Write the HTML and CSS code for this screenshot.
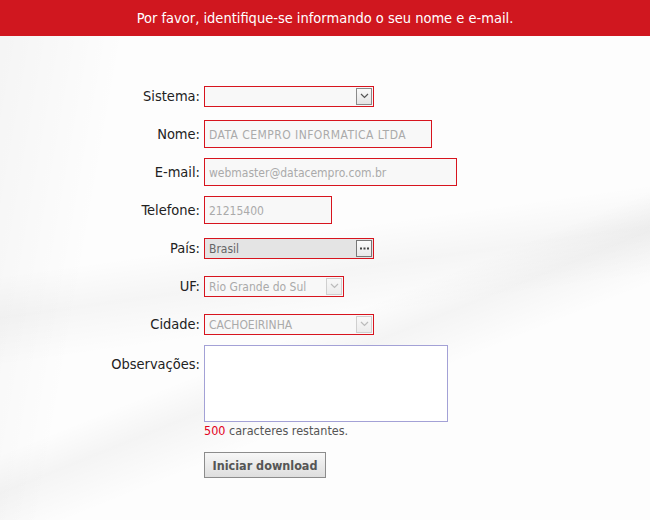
FILE: index.html
```html
<!DOCTYPE html>
<html lang="pt-BR">
<head>
    <meta charset="UTF-8">
    <title>Download</title>
    <link rel="stylesheet" href="styles.css">
</head>
<body>
    <div class="topbar">Por favor, identifique-se informando o seu nome e e-mail.</div>

    <form class="form">
        <div class="row">
            <label class="label">Sistema:</label>
            <div class="select sel-sistema">
                <span class="value"></span>
                <span class="btn">
                    <svg width="9" height="6" viewBox="0 0 9 6"><path d="M1 1 L4.5 4.5 L8 1" fill="none" stroke="#555" stroke-width="1.2"/></svg>
                </span>
            </div>
        </div>

        <div class="row">
            <label class="label">Nome:</label>
            <input class="text in-nome" type="text" value="DATA CEMPRO INFORMATICA LTDA" disabled>
        </div>

        <div class="row">
            <label class="label">E-mail:</label>
            <input class="text in-email" type="text" value="webmaster@datacempro.com.br" disabled>
        </div>

        <div class="row">
            <label class="label">Telefone:</label>
            <input class="text in-fone" type="text" value="21215400" disabled>
        </div>

        <div class="row">
            <label class="label">País:</label>
            <div class="select lookup sel-pais">
                <span class="value">Brasil</span>
                <span class="btn dots">
                    <svg width="9" height="3" viewBox="0 0 9 3"><rect x="0" y="0.5" width="2" height="2" fill="#444"/><rect x="3.5" y="0.5" width="2" height="2" fill="#444"/><rect x="7" y="0.5" width="2" height="2" fill="#444"/></svg>
                </span>
            </div>
        </div>

        <div class="row">
            <label class="label">UF:</label>
            <div class="select disabled sel-uf">
                <span class="value">Rio Grande do Sul</span>
                <span class="btn">
                    <svg width="9" height="6" viewBox="0 0 9 6"><path d="M1 1 L4.5 4.5 L8 1" fill="none" stroke="#bbb" stroke-width="1.2"/></svg>
                </span>
            </div>
        </div>

        <div class="row">
            <label class="label">Cidade:</label>
            <div class="select disabled sel-cidade">
                <span class="value">CACHOEIRINHA</span>
                <span class="btn">
                    <svg width="9" height="6" viewBox="0 0 9 6"><path d="M1 1 L4.5 4.5 L8 1" fill="none" stroke="#bbb" stroke-width="1.2"/></svg>
                </span>
            </div>
        </div>

        <div class="row row-obs">
            <label class="label">Observações:</label>
            <div class="obs">
                <textarea class="textarea"></textarea>
                <div class="counter"><span class="count">500</span> caracteres restantes.</div>
                <button type="button" class="submit">Iniciar download</button>
            </div>
        </div>
    </form>
</body>
</html>
```

FILE: styles.css
```css
body {
    margin: 0;
    height: 520px;
    font-family: "DejaVu Sans Condensed", "DejaVu Sans", sans-serif;
    color: #222;
    background-color: #fdfdfd;
    background-image:
        linear-gradient(158deg, rgba(255,255,255,0) 58%, rgba(0,0,0,0.035) 63%, rgba(255,255,255,0) 70%),
        linear-gradient(172deg, rgba(255,255,255,0) 45%, rgba(0,0,0,0.03) 52%, rgba(255,255,255,0) 60%),
        linear-gradient(100deg, rgba(0,0,0,0.035) 0%, rgba(255,255,255,0) 18%);
    overflow: hidden;
}

.topbar {
    height: 36px;
    line-height: 36px;
    background: #d0171f;
    color: #fff;
    text-align: center;
    font-size: 14.5px;
}

.form {
    padding-top: 41px;
}

.row {
    display: flex;
    align-items: center;
    height: 38px;
}

.label {
    width: 204px;
    padding-right: 4px;
    box-sizing: border-box;
    text-align: right;
    font-size: 14.5px;
    color: #222;
}

.text {
    box-sizing: border-box;
    height: 28px;
    margin: 0;
    padding: 2px 4px 0;
    border: 1px solid #d7141e;
    background: #f8f8f8;
    font-family: "DejaVu Sans Condensed", "DejaVu Sans", sans-serif;
    font-size: 12px;
    color: #aaa;
    outline: none;
}

.in-nome { width: 228px; letter-spacing: 0.45px; }
.in-email { width: 253px; }
.in-fone { width: 128px; }

.select {
    box-sizing: border-box;
    display: flex;
    align-items: center;
    height: 21px;
    border: 1px solid #d7141e;
    background: #f8f8f8;
    font-size: 12px;
    color: #aaa;
}

.select .value {
    flex: 1;
    padding: 2px 0 0 4px;
    white-space: nowrap;
}

.select .btn {
    box-sizing: border-box;
    width: 16px;
    height: 17px;
    margin-right: 1px;
    display: flex;
    align-items: center;
    justify-content: center;
    border: 1px solid #8a8a8a;
    background: linear-gradient(#fafafa, #e4e4e4);
}

.sel-sistema { width: 170px; }
.sel-pais { width: 170px; }
.sel-uf { width: 140px; }
.sel-cidade { width: 170px; }

.lookup {
    background: #e4e4e4;
}

.lookup .value {
    color: #666;
}

.select .dots {
    border-color: #777;
    background: linear-gradient(#fbfbfb, #e9e9e9);
}

.disabled .btn {
    border-color: #cfcfcf;
    background: linear-gradient(#f8f8f8, #ececec);
}

.row-obs {
    height: auto;
    align-items: flex-start;
    margin-top: 2px;
}

.row-obs .label {
    padding-top: 11px;
}

.obs {
    display: flex;
    flex-direction: column;
    align-items: flex-start;
}

.textarea {
    box-sizing: border-box;
    width: 244px;
    height: 77px;
    margin: 0;
    border: 1px solid #a3a1d6;
    background: #fff;
    resize: none;
    outline: none;
}

.counter {
    margin-top: 2px;
    font-size: 12.5px;
    line-height: 14px;
    color: #555;
}

.count {
    color: #e3001b;
}

.submit {
    margin-top: 14px;
    width: 122px;
    height: 26px;
    padding: 0;
    border: 1px solid #8c8c8c;
    border-radius: 0;
    background: linear-gradient(#f7f7f7, #dedede);
    font-family: "DejaVu Sans Condensed", "DejaVu Sans", sans-serif;
    font-size: 12.5px;
    font-weight: bold;
    color: #555;
}
```
